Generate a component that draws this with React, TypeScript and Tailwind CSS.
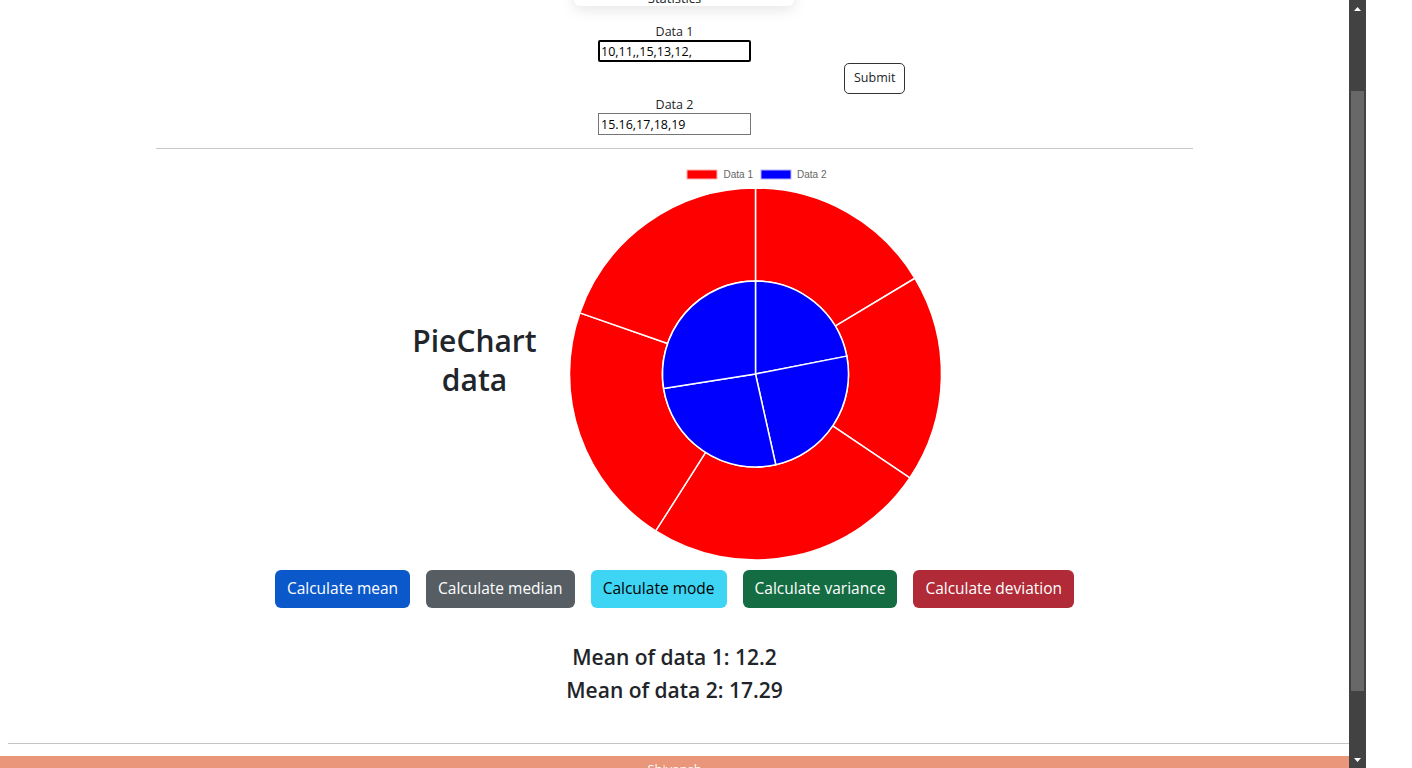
import React from 'react';

const data1 = [10, 11, NaN, 15, 13, 12];
const data2 = [15.16, 17, 18, 19];

const CX = 195.5;
const CY = 206;

function pt(r: number, a: number) {
  const rad = (a - 90) * (Math.PI / 180);
  return [CX + r * Math.cos(rad), CY + r * Math.sin(rad)];
}

function arcPath(r0: number, r1: number, a0: number, a1: number) {
  const large = a1 - a0 > 180 ? 1 : 0;
  const [x1, y1] = pt(r1, a0);
  const [x2, y2] = pt(r1, a1);
  if (r0 === 0) {
    return `M${CX},${CY} L${x1},${y1} A${r1},${r1} 0 ${large} 1 ${x2},${y2} Z`;
  }
  const [x3, y3] = pt(r0, a1);
  const [x4, y4] = pt(r0, a0);
  return `M${x1},${y1} A${r1},${r1} 0 ${large} 1 ${x2},${y2} L${x3},${y3} A${r0},${r0} 0 ${large} 0 ${x4},${y4} Z`;
}

function slices(values: number[], r0: number, r1: number, color: string) {
  const clean = values.map(v => (isNaN(v) ? 0 : v));
  const total = clean.reduce((s, v) => s + v, 0);
  let a = 0;
  return clean
    .filter(v => v > 0)
    .map((v, i) => {
      const sweep = (v / total) * 360;
      const d = arcPath(r0, r1, a, a + sweep);
      a += sweep;
      return <path key={i} d={d} fill={color} stroke="#fff" strokeWidth={1.5} strokeLinejoin="round" />;
    });
}

function PieChart() {
  return (
    <svg width={390} height={392} viewBox="0 0 390 392" className="shrink-0">
      <rect x={127} y={2} width={30} height={9} fill="#ff0000" stroke="#ffb3b3" strokeWidth={1} />
      <text x={163.5} y={10} fontSize={10} fill="#666" fontFamily="'Liberation Sans', Arial, sans-serif">
        Data 1
      </text>
      <rect x={201} y={2} width={30} height={9} fill="#0000ff" stroke="#b3b3ff" strokeWidth={1} />
      <text x={237} y={10} fontSize={10} fill="#666" fontFamily="'Liberation Sans', Arial, sans-serif">
        Data 2
      </text>
      {slices(data1, 93, 186, '#ff0000')}
      {slices(data2, 0, 93, '#0000ff')}
    </svg>
  );
}

function ScrollBar() {
  return (
    <div className="w-[17px] h-full bg-[#424242] flex flex-col shrink-0">
      <div className="h-[17px] flex items-center justify-center">
        <svg width="7" height="4" viewBox="0 0 7 4">
          <path d="M0 4 L3.5 0 L7 4 Z" fill="#fff" />
        </svg>
      </div>
      <div className="flex-1 pt-[74px] pb-[60px] px-[2px]">
        <div className="h-full bg-[#686868]" />
      </div>
      <div className="h-[17px] flex items-center justify-center">
        <svg width="7" height="4" viewBox="0 0 7 4">
          <path d="M0 0 L7 0 L3.5 4 Z" fill="#fff" />
        </svg>
      </div>
    </div>
  );
}

const buttons = [
  { label: 'Calculate mean', cls: 'bg-[#0a58ca] text-white' },
  { label: 'Calculate median', cls: 'bg-[#565e64] text-white' },
  { label: 'Calculate mode', cls: 'bg-[#3dd5f3] text-black' },
  { label: 'Calculate variance', cls: 'bg-[#146c43] text-white' },
  { label: 'Calculate deviation', cls: 'bg-[#b02a37] text-white' },
];

export default function App() {
  return (
    <div
      className="w-[1412px] h-[768px] overflow-hidden bg-white flex text-[#212529]"
      style={{ fontFamily: "'Open Sans', 'Noto Sans', sans-serif" }}
    >
      <div className="w-[1349px] h-full overflow-hidden flex flex-col shrink-0">
        {/* Statistics card, scrolled mostly out of view */}
        <div className="flex justify-center shrink-0">
          <div className="-mt-[18px] h-[24px] w-[220px] ml-[18px] pr-[18px] bg-white shadow-[0_4px_14px_rgba(0,0,0,0.1)] rounded-md flex items-end justify-center">
            <span className="text-[13px] leading-[15px]">Statistics</span>
          </div>
        </div>

        {/* form */}
        <div className="grid grid-cols-[1fr_auto_1fr] mt-[18px] shrink-0">
          <div />
          <div className="flex flex-col items-center text-[12.5px]">
            <label className="leading-[15px]">Data 1</label>
            <input
              defaultValue="10,11,,15,13,12,"
              className="mt-px w-[153px] h-[22px] border-2 border-black rounded-[2px] px-[1px] text-[12.5px] text-black outline-none"
            />
            <label className="leading-[15px] mt-[35px]">Data 2</label>
            <input
              defaultValue="15.16,17,18,19"
              className="mt-px w-[153px] h-[22px] border border-[#767676] px-[2px] text-[12.5px] text-black outline-none"
            />
          </div>
          <div className="flex items-center">
            <button className="ml-[93px] mt-[-2px] h-[31px] px-[9px] border border-[#333] rounded-[5px] text-[12.5px] bg-white">
              Submit
            </button>
          </div>
        </div>

        <div className="mt-[13px] w-[1037px] mx-auto border-t border-[#c8c8c8] shrink-0" />

        {/* chart row */}
        <div className="mt-[19px] h-[392px] flex justify-center items-center gap-[10px] shrink-0">
          <h2 className="w-[150px] text-center text-[30px] leading-[39px] font-semibold pb-[8px]">
            PieChart
            <br />
            data
          </h2>
          <PieChart />
        </div>

        {/* buttons */}
        <div className="mt-[10px] flex justify-center gap-4 shrink-0">
          {buttons.map(b => (
            <button key={b.label} className={`h-[38px] px-3 rounded-md text-[15.5px] ${b.cls}`}>
              {b.label}
            </button>
          ))}
        </div>

        <div className="mt-[33px] text-center text-[21px] leading-[33px] font-semibold shrink-0">
          <div>Mean of data 1: 12.2</div>
          <div>Mean of data 2: 17.29</div>
        </div>

        <div className="mt-[36px] ml-[8px] border-t border-[#c4c4c4] shrink-0" />

        <footer className="mt-[12px] h-[40px] bg-[#e9967a] text-white text-center text-[13px] pt-[4px] shrink-0">
          Shivansh
        </footer>
      </div>
      <ScrollBar />
      <div className="flex-1 bg-white" />
    </div>
  );
}
